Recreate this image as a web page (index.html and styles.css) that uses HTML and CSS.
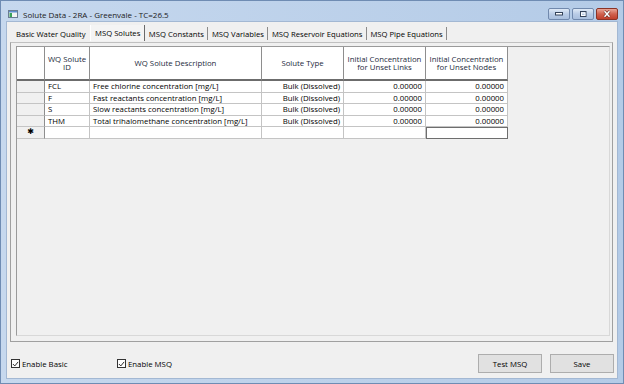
FILE: index.html
```html
<!DOCTYPE html>
<html lang="en">
<head>
    <meta charset="UTF-8">
    <meta name="viewport" content="width=device-width, initial-scale=1.0">
    <title>Solute Data</title>
    <link rel="stylesheet" href="styles.css">
</head>
<body>
    <div class="window">
        <div class="titlebar">
            <svg class="app-icon" width="10" height="8" viewBox="0 0 10 8">
                <rect x="0.5" y="0.5" width="9" height="7" fill="#f4f4f4" stroke="#6a7d92"/>
                <rect x="1" y="1" width="8" height="1.5" fill="#5f8fcf"/>
                <rect x="1.5" y="3" width="2.5" height="4" fill="#3aa35a"/>
            </svg>
            <span class="title">Solute Data - 2RA - Greenvale - TC=26.5</span>
            <div class="caption-buttons">
                <span class="cap-btn">
                    <svg width="10" height="5" viewBox="0 0 10 5"><rect x="1.5" y="1.5" width="7" height="2.5" fill="#fff" stroke="#34435a"/></svg>
                </span>
                <span class="cap-btn">
                    <svg width="10" height="8" viewBox="0 0 10 8"><rect x="2.5" y="1.5" width="5.5" height="5" fill="none" stroke="#34435a"/><rect x="3.5" y="3" width="3.5" height="2.5" fill="none" stroke="#fff"/></svg>
                </span>
                <span class="cap-btn close">
                    <svg width="10" height="8" viewBox="0 0 10 8"><path d="M2.5 1.2 L7.5 6.8 M7.5 1.2 L2.5 6.8" stroke="#5a1a12" stroke-width="2.6"/><path d="M2.5 1.2 L7.5 6.8 M7.5 1.2 L2.5 6.8" stroke="#fff" stroke-width="1.6"/></svg>
                </span>
            </div>
        </div>

        <div class="client">
            <div class="tabs">
                <span class="tab first">Basic Water Quality</span>
                <span class="tab active">MSQ Solutes</span>
                <span class="tab">MSQ Constants</span>
                <span class="tab">MSQ Variables</span>
                <span class="tab">MSQ Reservoir Equations</span>
                <span class="tab">MSQ Pipe Equations</span>
            </div>

            <div class="tab-page">
                <div class="grid">
                    <div class="sheet">
                        <div class="hd corner"></div>
                        <div class="hd">WQ Solute<br>ID</div>
                        <div class="hd">WQ Solute Description</div>
                        <div class="hd">Solute Type</div>
                        <div class="hd">Initial Concentration<br>for Unset Links</div>
                        <div class="hd">Initial Concentration<br>for Unset Nodes</div>

                        <div class="rh"></div>
                        <div class="cell">FCL</div>
                        <div class="cell">Free chlorine concentration [mg/L]</div>
                        <div class="cell num">Bulk (Dissolved)</div>
                        <div class="cell num">0.00000</div>
                        <div class="cell num">0.00000</div>

                        <div class="rh"></div>
                        <div class="cell">F</div>
                        <div class="cell">Fast reactants concentration [mg/L]</div>
                        <div class="cell num">Bulk (Dissolved)</div>
                        <div class="cell num">0.00000</div>
                        <div class="cell num">0.00000</div>

                        <div class="rh"></div>
                        <div class="cell">S</div>
                        <div class="cell">Slow reactants concentration [mg/L]</div>
                        <div class="cell num">Bulk (Dissolved)</div>
                        <div class="cell num">0.00000</div>
                        <div class="cell num">0.00000</div>

                        <div class="rh"></div>
                        <div class="cell">THM</div>
                        <div class="cell">Total trihalomethane concentration [mg/L]</div>
                        <div class="cell num">Bulk (Dissolved)</div>
                        <div class="cell num">0.00000</div>
                        <div class="cell num">0.00000</div>

                        <div class="rh new-row">&#10033;</div>
                        <div class="cell"></div>
                        <div class="cell"></div>
                        <div class="cell"></div>
                        <div class="cell"></div>
                        <div class="cell focus"></div>
                    </div>
                </div>
            </div>

            <div class="footer">
                <label class="check basic">
                    <span class="box"><svg width="8" height="8" viewBox="0 0 8 8"><path d="M1 4 L3.2 6.2 L7 1.6" fill="none" stroke="#222" stroke-width="1.1"/></svg></span>
                    Enable Basic
                </label>
                <label class="check">
                    <span class="box"><svg width="8" height="8" viewBox="0 0 8 8"><path d="M1 4 L3.2 6.2 L7 1.6" fill="none" stroke="#222" stroke-width="1.1"/></svg></span>
                    Enable MSQ
                </label>
                <button class="btn">Test MSQ</button>
                <button class="btn">Save</button>
            </div>
        </div>
    </div>
</body>
</html>
```

FILE: styles.css
```css
body {
    margin: 0;
    font-family: "Open Sans", "Noto Sans", sans-serif;
    font-size: 7.8px;
    color: #000;
    background-color: #fff;
}
.window {
    width: 624px;
    height: 384px;
    box-sizing: border-box;
    border: 1px solid #6f8cb3;
    background: linear-gradient(to right, #c6d8ee, #b4cbe7);
    padding: 0 6px 5px;
    display: flex;
    flex-direction: column;
}
.titlebar {
    height: 21px;
    margin: 0 -6px;
    padding: 4px 5px 0 7px;
    box-sizing: border-box;
    display: flex;
    align-items: center;
}
.app-icon {
    margin-right: 5px;
    margin-top: 1px;
}
.title {
    margin-top: 2px;
    font-size: 8px;
    color: #1b1b1b;
}
.caption-buttons {
    margin-left: auto;
    display: flex;
    gap: 2px;
}
.cap-btn {
    width: 22px;
    height: 12px;
    box-sizing: border-box;
    border: 1px solid #7189ad;
    border-radius: 2px;
    background: linear-gradient(#dfe9f6, #b9cce6 50%, #a9bfde);
    display: flex;
    align-items: center;
    justify-content: center;
}
.cap-btn.close {
    border-color: #8a3326;
    background: linear-gradient(#e9a596, #d0614e 50%, #c13f2b);
}
.client {
    flex: 1;
    background-color: #f0f0f0;
    box-shadow: 0 0 0 1px #a3b8d3;
    display: flex;
    flex-direction: column;
}
.tabs {
    display: flex;
    height: 16px;
    margin: 3px 0 0 5px;
    padding-bottom: 1px;
    font-size: 7.7px;
}
.tab {
    padding: 0 3.5px;
    display: flex;
    align-items: center;
    border-right: 1px solid #8a8a8a;
    margin: 2px 0 1px;
}
.tab.first {
    padding-left: 4px;
    border-right: none;
    margin-right: 1px;
}
.tab.active {
    margin: 0;
    border-left: 1px solid #fff;
    border-right: 1px solid #6a6a6a;
    padding: 0 4px;
    background-color: #f4f4f4;
}
.tab-page {
    flex: 0 0 300px;
    margin: 0 4px 0 3px;
    border: 1px solid #a0a0a0;
    border-top-color: #c0c0c0;
    box-sizing: border-box;
    padding: 3px 2px 5px 5px;
    display: flex;
}
.grid {
    flex: 1;
    border: 1px solid #9a9a9a;
    border-right-color: #d8d8d8;
    border-bottom-color: #d8d8d8;
    background-color: #f0f0f0;
}
.sheet {
    display: grid;
    grid-template-columns: 28px 45px 172px 82px 82px 82px;
    grid-template-rows: 34px 12px 11px 12px 11px 12px;
}
.hd {
    background-color: #fff;
    border-right: 1px solid #8e8e8e;
    border-bottom: 2px solid #6c6c6c;
    box-sizing: border-box;
    display: flex;
    align-items: center;
    justify-content: center;
    text-align: center;
    line-height: 8.5px;
    color: #1c2a3c;
}
.cell {
    background-color: #fff;
    border-right: 1px solid #c4c4c4;
    border-bottom: 1px solid #c4c4c4;
    box-sizing: border-box;
    padding: 0 3px;
    line-height: 10px;
    white-space: nowrap;
    overflow: hidden;
}
.cell.num {
    text-align: right;
}
.cell.focus {
    border: 1px solid #6e6e6e;
}
.rh {
    background-color: #f0f0f0;
    border-right: 1px solid #8e8e8e;
    border-bottom: 1px solid #c4c4c4;
    box-sizing: border-box;
}
.new-row {
    text-align: center;
    font-size: 8px;
    line-height: 10px;
    font-family: "DejaVu Sans", sans-serif;
    font-weight: bold;
}
.footer {
    display: flex;
    align-items: center;
    padding: 0 3px 0 4px;
    margin-top: 12px;
}
.check {
    display: flex;
    align-items: center;
    gap: 2px;
}
.check.basic {
    width: 106px;
}
.box {
    width: 9px;
    height: 9px;
    box-sizing: border-box;
    border: 1px solid #333;
    background-color: #fff;
    display: flex;
    align-items: center;
    justify-content: center;
}
.btn {
    width: 64px;
    height: 19px;
    margin-left: 8px;
    border: 1px solid #adadad;
    background-color: #e1e1e1;
    font-family: inherit;
    font-size: 7.8px;
    color: #000;
    padding: 0;
}
.footer .btn:first-of-type {
    margin-left: auto;
}
```
